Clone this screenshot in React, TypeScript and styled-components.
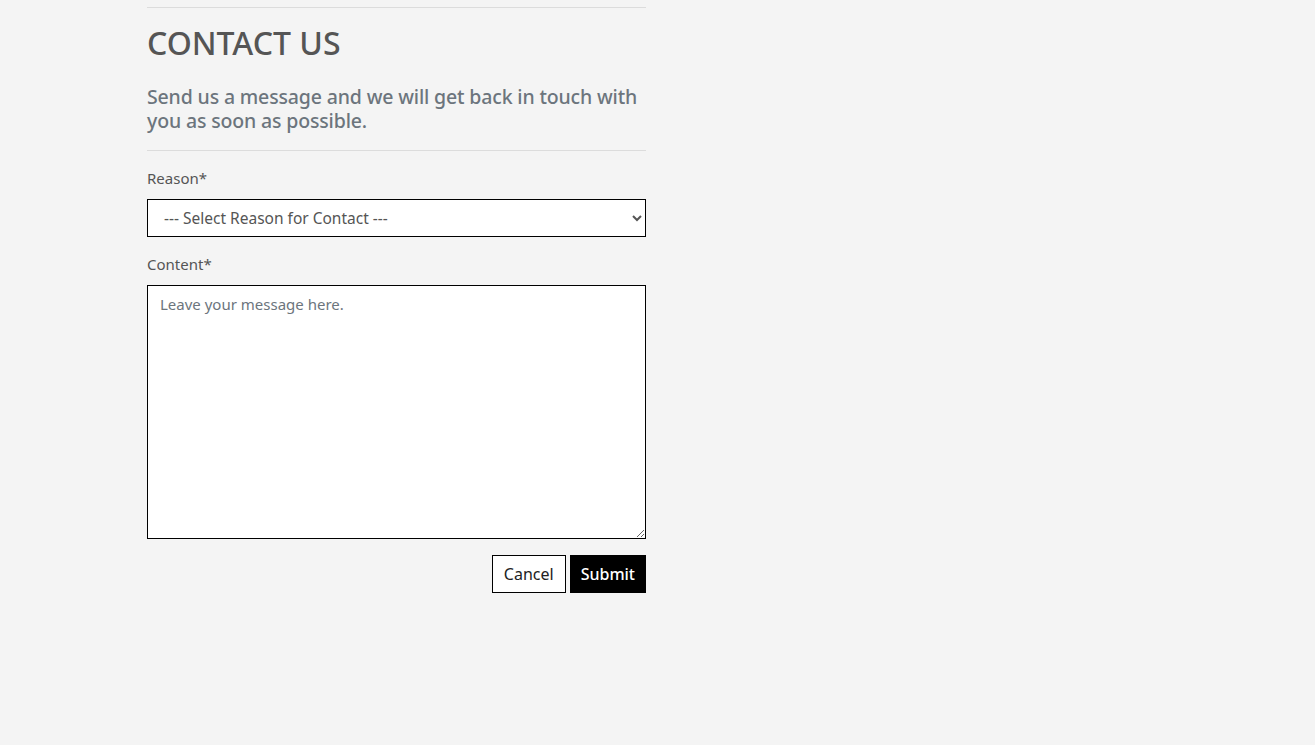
import { createGlobalStyle } from 'styled-components'
import styled from 'styled-components'

const GlobalStyle = createGlobalStyle`
  html, body {
    margin: 0;
    padding: 0;
    background: #f4f4f4;
  }
  body {
    font-family: 'Noto Sans', 'Open Sans', sans-serif;
    color: #555;
  }
  * {
    box-sizing: border-box;
  }
`

const Page = styled.div`
  min-height: 745px;
  background: #f4f4f4;
  padding: 7px 0 0 147px;
`

const Section = styled.section`
  width: 499px;
  display: flex;
  flex-direction: column;
`

const Divider = styled.hr`
  margin: 0;
  border: none;
  border-top: 1px solid #dcdcdc;
`

const Title = styled.h1`
  margin: 16px 0 0;
  font-size: 32px;
  font-weight: 500;
  line-height: 38px;
  color: #555;
`

const Intro = styled.p`
  margin: 23px 0 17px;
  font-size: 19.5px;
  font-weight: 500;
  line-height: 24px;
  color: #6c757d;
  letter-spacing: -0.15px;
`

const Form = styled.form`
  display: flex;
  flex-direction: column;
  padding-top: 16px;
`

const Label = styled.label`
  font-size: 15px;
  line-height: 22px;
  color: #555;
  margin-bottom: 10px;
`

const Select = styled.select`
  height: 38px;
  width: 100%;
  border: 1px solid #000;
  border-radius: 0;
  background: #fff;
  padding: 0 12px;
  font-family: inherit;
  font-size: 15.5px;
  color: #555;
  margin-bottom: 16px;
`

const TextArea = styled.textarea`
  height: 254px;
  width: 100%;
  border: 1px solid #000;
  border-radius: 0;
  background: #fff;
  padding: 7px 12px;
  font-family: inherit;
  font-size: 15px;
  line-height: 22px;
  color: #555;
  resize: vertical;

  &::placeholder {
    color: #6c757d;
  }
`

const Actions = styled.div`
  display: flex;
  justify-content: flex-end;
  gap: 4px;
  margin-top: 16px;
`

const Button = styled.button<{ $primary?: boolean }>`
  height: 38px;
  padding: 0 ${({ $primary }) => ($primary ? '10px' : '11px')};
  border: 1px solid #000;
  border-radius: 0;
  font-family: inherit;
  font-size: 16px;
  font-weight: ${({ $primary }) => ($primary ? 500 : 400)};
  background: ${({ $primary }) => ($primary ? '#000' : '#fff')};
  color: ${({ $primary }) => ($primary ? '#fff' : '#222')};
  cursor: pointer;
`

export default function App() {
  return (
    <Page>
      <GlobalStyle />
      <Section>
        <Divider />
        <Title>CONTACT US</Title>
        <Intro>Send us a message and we will get back in touch with you as soon as possible.</Intro>
        <Divider />
        <Form onSubmit={(e) => e.preventDefault()}>
          <Label htmlFor="reason">Reason*</Label>
          <Select id="reason" defaultValue="">
            <option value="">--- Select Reason for Contact ---</option>
            <option value="general">General Enquiry</option>
            <option value="support">Support</option>
          </Select>
          <Label htmlFor="content">Content*</Label>
          <TextArea id="content" placeholder="Leave your message here." />
          <Actions>
            <Button type="button">Cancel</Button>
            <Button type="submit" $primary>
              Submit
            </Button>
          </Actions>
        </Form>
      </Section>
    </Page>
  )
}
